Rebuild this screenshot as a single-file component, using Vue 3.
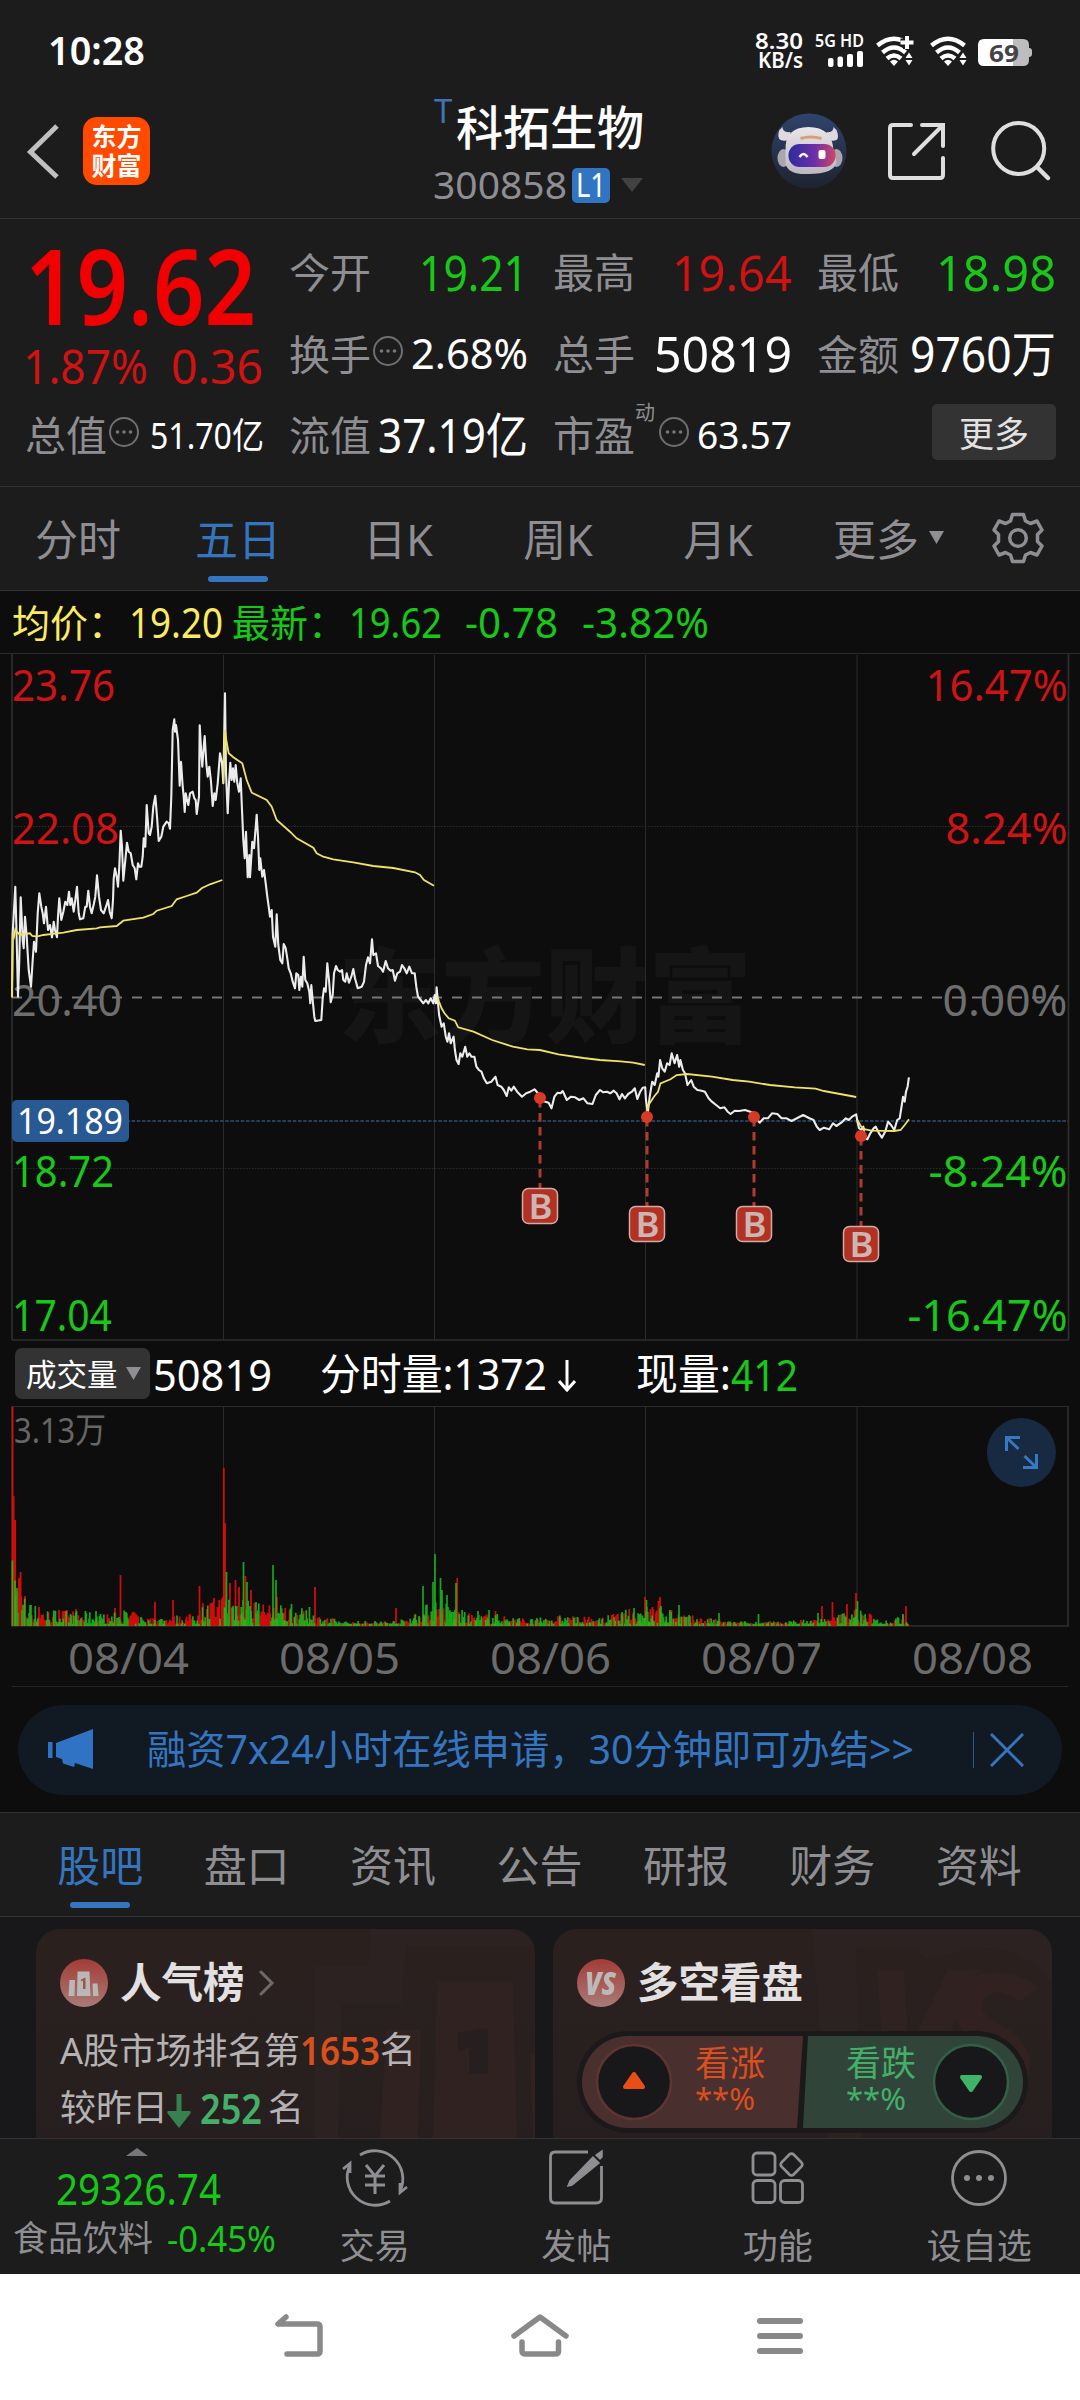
<script setup>
import { h } from 'vue'

// Single line of text fitted to a fixed width, vertically centred on its digits.
const Fit = (p) =>
  h('svg', { width: p.w, height: p.s, style: { overflow: 'visible', flex: 'none', display: 'block' } }, [
    h('text', { x: 0, y: p.s * 0.857, 'font-size': p.s, textLength: p.w, lengthAdjust: 'spacingAndGlyphs', fill: 'currentColor' }, p.t),
  ])
Fit.props = ['t', 'w', 's']

const quotes = [
  [
    { label: '今开', v: '19.21', w: 109, s: 50, c: 'green' },
    { label: '最高', v: '19.64', w: 120, s: 50, c: 'red' },
    { label: '最低', v: '18.98', w: 120, s: 50, c: 'green' },
  ],
  [
    { label: '换手', info: true, v: '2.68%', w: 117, s: 42 },
    { label: '总手', v: '50819', w: 138, s: 50 },
    { label: '金额', v: '9760万', w: 146, s: 49 },
  ],
]

const periods = ['分时', '五日', '日K', '周K', '月K']
const sections = ['股吧', '盘口', '资讯', '公告', '研报', '财务', '资料']
const dates = ['08/04', '08/05', '08/06', '08/07', '08/08']

// Compact point lists: early segment in thirds of a pixel, late segment in its own scale.
const early = (s) => s.trim().split(/\s+/).map((p) => { const [x, y] = p.split(',').map(Number); return (x / 3).toFixed(1) + ',' + (640 + y / 3).toFixed(1) }).join(' ')
const late = (s) => s.trim().split(/\s+/).map((p) => { const [x, y] = p.split(',').map(Number); return (430 + x / 2.412).toFixed(1) + ',' + (900 + y / 3).toFixed(1) }).join(' ')

const priceLine = early(`36,1072 38,880 46,740 50,900 54,1070 58,960 62,772 68,900 71,925 75,830 80,890 86,990 93,1040 98,960 102,905 108,935 113,820 118,760 124,800 128,820 132,850 138,800 144,870 150,855 156,892 161,845 165,870 171,892 174,830 178,775 184,840 190,815 196,785 202,795 207,755 211,795 215,775 221,815 226,780 231,740 236,820 240,838 250,835 256,800 260,800 265,752 270,800 275,820 282,790 286,770 291,706 297,770 303,810 311,820 318,800 324,780 329,815 335,835 339,780 341,716 345,685 350,710 354,740 358,680 362,572 366,620 370,722 375,670 381,608 386,635 392,640 398,675 404,685 409,718 414,670 418,680 424,680 428,650 431,595 436,620 440,495 446,580 450,585 455,560 460,500 466,467 471,530 476,603 484,590 490,560 500,545 506,550 510,566 514,470 518,270 523,238 525,275 528,255 534,300 539,437 543,365 548,440 551,470 554,516 557,460 560,475 565,495 570,460 578,455 583,475 587,480 590,522 597,470 599,256 604,340 607,380 611,320 614,288 619,370 623,410 628,380 633,425 638,498 643,460 647,480 653,430 660,340 666,370 670,430 675,160 678,400 683,520 687,430 691,368 695,420 699,385 703,425 707,375 712,430 717,455 722,415 726,510 730,600 734,655 738,575 743,712 748,645 750,712 757,605 762,625 770,524 774,590 778,690 781,655 787,710 792,690 797,730 802,770 806,800 810,830 815,810 819,890 826,920 830,823 835,915 841,960 847,970 851,912 857,925 862,955 866,985 872,1000 878,1025 885,1045 889,1000 895,1005 898,1050 903,1010 907,1040 911,950 916,1020 922,1030 928,1055 931,1090 934,1035 939,1090 943,1130 946,1143 964,1140 968,1075 972,1045 977,1055 982,970 987,1020 992,1087 998,1065 1002,1000 1008,978 1013,990 1020,995 1026,990 1030,1020 1036,1025 1040,1000 1047,1028 1054,1010 1060,987 1065,1015 1073,1045 1085,1040 1092,1025 1098,975 1104,952 1110,970 1116,898 1120,945 1128,940 1134,978 1143,985 1149,995 1157,963 1164,985 1172,992 1178,990 1185,1022 1192,1000 1200,995 1206,975 1213,985 1220,1000 1228,980 1236,1000 1244,1000 1249,1040 1254,1070 1262,1080 1270,1090 1278,1080 1285,1090 1292,1075 1300,1090 1304,1065 1308,1090`) + ' ' +
late(`16,262 22,345 28,380 33,370 38,410 42,425 46,400 50,430 57,410 60,450 64,480 69,492 73,460 78,470 85,440 90,470 95,460 100,470 107,470 112,500 118,510 124,515 130,535 137,550 148,545 158,530 163,555 172,560 178,570 185,588 190,562 196,572 202,560 210,575 222,590 232,580 242,575 252,568 262,582 268,600 278,605 286,608 293,625 300,590 308,578 315,580 320,573 330,600 340,590 350,592 360,600 370,595 380,610 392,612 400,585 410,570 418,577 427,575 435,580 443,572 450,580 457,598 463,582 470,595 478,582 487,575 494,565 500,597 507,575 513,563 519,562 521,600 525,640 530,590 536,545 542,555 548,520 551,530 555,480 560,505 566,515 572,490 578,495 583,460 590,490 596,465 601,500 604,480 610,510 615,520 621,555 630,540 636,560 645,570 655,572 663,575 672,595 680,605 690,615 700,625 710,622 718,635 725,642 735,632 745,633 760,630 772,635 783,640 790,660 795,668 805,655 815,655 825,640 838,642 848,655 860,655 872,663 885,655 900,645 915,655 925,660 933,680 940,690 950,683 963,688 972,670 980,678 992,668 1003,655 1010,660 1018,650 1028,643 1031,665 1035,685 1040,690 1045,680 1049,715 1055,718 1062,700 1070,685 1075,680 1083,700 1090,713 1098,695 1105,665 1112,675 1120,690 1127,660 1133,655 1138,615 1141,590 1145,605 1148,575 1152,560 1155,532`)

const averages = [
  early('36,1072 38,880 42,890 46,868 50,875 60,885 75,882 90,880 97,888 110,890 130,885 170,880 190,878 230,870 290,865 300,862 350,858 370,842 430,833 460,822 470,812 515,798 530,778 560,768 590,758 605,745 630,733 667,720'),
  early('670,430 675,270 679,300 686,340 700,352 727,370 740,420 755,458 800,480 815,500 830,540 870,575 890,595 940,623 950,640 970,650 1000,658 1060,667 1120,678 1180,684 1245,697 1260,705 1272,720 1302,737'),
  late('18,290 22,305 28,325 35,340 45,355 60,362 68,382 105,395 150,420 200,440 235,448 265,450 310,463 370,474 410,480 460,484 490,488 518,495'),
  late('523,640 527,615 540,590 550,575 556,550 580,538 595,525 620,522 680,530 730,540 770,545 820,555 880,562 930,566 950,573 1028,591'),
  late('1031,660 1040,680 1050,688 1065,692 1120,693 1135,690 1145,675 1155,658'),
]

const priceLabels = [
  { t: '23.76', w: 103, y: 685, c: '#cc1414' },
  { t: '22.08', w: 107, y: 828, c: '#cc1414' },
  { t: '20.40', w: 110, y: 1000, c: '#6e6e6e' },
  { t: '18.72', w: 102, y: 1171, c: '#1bc61b' },
  { t: '17.04', w: 100, y: 1315, c: '#1bc61b' },
]
const pctLabels = [
  { t: '16.47%', w: 142, y: 685, c: '#cc1414' },
  { t: '8.24%', w: 122, y: 828, c: '#cc1414' },
  { t: '0.00%', w: 125, y: 1000, c: '#6e6e6e' },
  { t: '-8.24%', w: 139, y: 1171, c: '#1bc61b' },
  { t: '-16.47%', w: 160, y: 1315, c: '#1bc61b' },
]
const buys = [
  { x: 540, y: 1098, b: 1206 },
  { x: 647, y: 1117, b: 1224 },
  { x: 754, y: 1117, b: 1224 },
  { x: 861, y: 1136, b: 1244 },
]

// Volume bars: envelope of typical heights, seeded jitter, plus individual spikes.
const envelope = [[12, 60], [18, 45], [22, 28], [30, 20], [45, 14], [60, 14], [90, 12], [110, 10], [125, 14], [150, 7], [190, 10], [225, 30], [245, 26], [262, 18], [290, 18], [320, 9], [345, 4], [400, 5], [420, 14], [436, 24], [450, 18], [470, 10], [500, 10], [530, 6], [560, 9], [600, 7], [640, 17], [665, 17], [690, 9], [730, 4], [780, 4], [830, 7], [857, 16], [875, 8], [890, 5], [909, 12]]
const spikes = [[12.6, 219, 1], [13.6, 130, 1], [15.2, 106, 1], [17, 38, 0], [19, 48, 1], [20.6, 54, 1], [25, 30, 1], [31, 21, 0], [39, 19, 1], [59, 16, 1], [76, 17, 1], [96, 15, 0], [115, 18, 1], [120.5, 51, 1], [155, 24, 1], [173, 26, 1], [199.5, 40, 1], [203, 23, 1], [223.8, 158, 1], [225, 103, 1], [226.5, 54, 0], [230, 43, 1], [235.5, 46, 1], [239, 39, 1], [243.5, 64, 0], [245.5, 50, 1], [247, 44, 0], [251, 36, 1], [256, 24, 0], [273, 61, 0], [276, 46, 0], [277, 29, 1], [291.5, 22, 0], [309.5, 19, 0], [315, 39, 1], [396, 18, 1], [423, 40, 0], [433, 44, 0], [435, 72, 0], [440.5, 48, 0], [442, 36, 0], [447, 31, 0], [456, 43, 0], [457.2, 48, 1], [478, 15, 0], [489, 16, 0], [495.5, 15, 1], [634, 18, 0], [645, 29, 1], [646.5, 26, 0], [652.5, 19, 1], [658.5, 25, 1], [660, 29, 1], [671, 14, 0], [679, 21, 0], [719, 13, 0], [758.5, 12, 0], [818, 13, 0], [822, 20, 1], [832.5, 24, 1], [847, 22, 1], [856, 33, 1], [857.5, 25, 0], [906, 20, 1], [903, 12, 0]]
let seed = 7
const rnd = () => ((seed = (seed * 16807) % 2147483647) / 2147483647)
const level = (x) => {
  for (let i = 1; i < envelope.length; i++) {
    const [a, ya] = envelope[i - 1]
    const [b, yb] = envelope[i]
    if (x <= b) return ya + ((yb - ya) * (x - a)) / (b - a)
  }
  return 8
}
const bars = []
let up = 1
for (let x = 12.4; x < 909; x += 0.88) {
  if (rnd() < 0.42) up = 1 - up
  bars.push({ x, v: Math.max(2.2, level(x) * (0.12 + Math.pow(rnd(), 1.4)) * 1.1), up })
}
for (const [x, v, u] of spikes) bars.push({ x, v, up: u })
const path = (u) => bars.filter((b) => b.up === u).map((b) => `M${b.x.toFixed(1)} 1626v-${b.v.toFixed(1)}`).join('')
const redBars = path(1)
const greenBars = path(0)
</script>

<template>
  <div class="screen">
    <div class="status">
      <Fit class="w6" t="10:28" :w="97" :s="39" />
      <svg class="sysicons" width="278" height="50" viewBox="755 27 278 50">
        <g fill="#fff" class="w6">
          <text x="755" y="49" font-size="22" textLength="48" lengthAdjust="spacingAndGlyphs">8.30</text>
          <text x="758" y="68" font-size="21" textLength="45" lengthAdjust="spacingAndGlyphs">KB/s</text>
          <text x="815" y="46.500" font-size="17.500" textLength="49" lengthAdjust="spacingAndGlyphs">5G HD</text>
          <rect x="828" y="58" width="5.500" height="9" rx="2" /><rect x="837.500" y="56.500" width="5.500" height="10.500" rx="2" />
          <rect x="847" y="54" width="6" height="13" rx="2" /><rect x="857" y="51" width="6" height="16" rx="2" />
        </g>
        <g v-for="x in [894, 948]" :key="x" :transform="`translate(${x} 0)`">
          <g fill="none" stroke="#fff" stroke-width="4.500">
            <path d="M-16.500 45.500Q0 32 16.500 45.500" /><path d="M-11.500 52.500Q0 42.500 11.500 52.500" /><path d="M-7 58.500Q0 52.500 7 58.500" />
          </g>
          <path d="M-4 61.500Q0 58 4 61.500L0 66ZM11.500 58L15 52.500L18.500 58ZM11.500 60L15 65.500L18.500 60Z" fill="#fff" />
        </g>
        <path d="M907 36V49M900.500 42.500H913.500" stroke="#1c1c1c" stroke-width="8" /><path d="M907 36V49M900.500 42.500H913.500" stroke="#fff" stroke-width="4" />
        <path d="M984 39H1013V66H984Q978 66 978 60V45Q978 39 984 39Z" fill="#fff" />
        <path d="M1013 39H1023Q1029 39 1029 45V48Q1032 48 1032 51V54Q1032 57 1029 57V60Q1029 66 1023 66H1013Z" fill="#bdbdbd" />
        <text class="w7" x="989" y="61.500" font-size="24" textLength="30" lengthAdjust="spacingAndGlyphs" fill="#444">69</text>
      </svg>
    </div>

    <header class="head">
      <div class="head-left">
        <svg width="34" height="58" viewBox="26 122 34 58"><path d="M57 126L30.500 152L57 177" fill="none" stroke="#c0c0c0" stroke-width="5" /></svg>
        <div class="logo"><span>东方</span><span>财富</span></div>
      </div>
      <div class="head-title">
        <div class="name"><span class="t">T</span>科拓生物</div>
        <div class="code">
          <Fit t="300858" :w="134" :s="38" />
          <span class="l1"><Fit t="L1" :w="30" :s="33" /></span>
          <svg width="22" height="14" viewBox="0 0 22 14"><path d="M0 0H22L11 14Z" fill="#424242" /></svg>
        </div>
      </div>
      <div class="head-right">
        <svg width="76" height="76" viewBox="770.500 113 76 76">
          <defs>
            <linearGradient id="sky" x1="0" y1="0" x2="0" y2="1"><stop offset="0" stop-color="#2f436b" /><stop offset="1" stop-color="#1e2330" /></linearGradient>
            <linearGradient id="visor"><stop offset="0" stop-color="#2f2c9c" /><stop offset=".55" stop-color="#6b2fa8" /><stop offset="1" stop-color="#cf4668" /></linearGradient>
            <linearGradient id="helm" x1="0" y1="0" x2="0" y2="1"><stop offset="0" stop-color="#e8e6ea" /><stop offset="1" stop-color="#bcb8bf" /></linearGradient>
          </defs>
          <circle cx="808.500" cy="151" r="37.500" fill="url(#sky)" />
          <path d="M789 140Q776 143 778 133Q779 129 782 127Q782 133 790 132ZM828 140Q840 143 837 133Q836 129 833 127Q833 133 826 132Z" fill="#ddd9df" />
          <ellipse cx="783" cy="158" rx="6" ry="9" fill="#a9a6b0" /><ellipse cx="836" cy="158" rx="6" ry="9" fill="#a9a6b0" />
          <path d="M785 151Q784 127 808 127Q832 127 833 151L836 162Q834 174 808 174Q788 175 785 164Z" fill="url(#helm)" />
          <rect x="788" y="144" width="47" height="23" rx="11" fill="url(#visor)" />
          <path d="M799 157Q803 151 807 157" fill="none" stroke="#fff" stroke-width="2.500" /><rect x="818" y="150" width="7" height="9" rx="2" fill="#fff" />
          <path d="M800 138.500Q810 135.500 821 138.500" fill="none" stroke="#d99f72" stroke-width="3" />
        </svg>
        <svg class="share" width="60" height="60" viewBox="887 121 60 60"><path d="M911 125H893Q890 125 890 128V175Q890 178 893 178H940Q943 178 943 175V158M922 125H943V146M942 126L914 154" fill="none" stroke="#dedede" stroke-width="4" stroke-linecap="round" /></svg>
        <svg width="62" height="62" viewBox="990 120 62 62"><circle cx="1018.700" cy="148.500" r="25.500" fill="none" stroke="#dedede" stroke-width="4" /><path d="M1037 167L1048 178" stroke="#dedede" stroke-width="4.500" stroke-linecap="round" /></svg>
      </div>
    </header>

    <section class="quote">
      <div class="main">
        <Fit class="w6 big" t="19.62" :w="231" :s="105" />
        <div class="chg red"><Fit t="1.87%" :w="125" :s="47" /><Fit t="0.36" :w="92" :s="47" /></div>
        <div class="cell"><span>总值</span><svg class="info" width="32" height="32" viewBox="0 0 32 32"><circle cx="16" cy="16" r="14" fill="none" stroke="#6f6f73" stroke-width="2" /><g fill="#77777b"><circle cx="9.500" cy="16" r="1.800" /><circle cx="16" cy="16" r="1.800" /><circle cx="22.500" cy="16" r="1.800" /></g></svg><Fit class="v" t="51.70亿" :w="114" :s="36" /></div>
      </div>
      <div class="grid">
        <div v-for="(row, i) in quotes" :key="i" class="row">
          <div v-for="q in row" :key="q.label" class="cell">
            <span>{{ q.label }}</span>
            <svg v-if="q.info" class="info" width="32" height="32" viewBox="0 0 32 32"><circle cx="16" cy="16" r="14" fill="none" stroke="#6f6f73" stroke-width="2" /><g fill="#77777b"><circle cx="9.500" cy="16" r="1.800" /><circle cx="16" cy="16" r="1.800" /><circle cx="22.500" cy="16" r="1.800" /></g></svg>
            <Fit class="v" :class="q.c" :t="q.v" :w="q.w" :s="q.s" />
          </div>
        </div>
        <div class="row">
          <div class="cell"><span>流值</span><Fit class="v" t="37.19亿" :w="150" :s="48" /></div>
          <div class="cell"><span>市盈</span><sup>动</sup><svg class="info" width="32" height="32" viewBox="0 0 32 32"><circle cx="16" cy="16" r="14" fill="none" stroke="#6f6f73" stroke-width="2" /><g fill="#77777b"><circle cx="9.500" cy="16" r="1.800" /><circle cx="16" cy="16" r="1.800" /><circle cx="22.500" cy="16" r="1.800" /></g></svg><Fit class="v" t="63.57" :w="95" :s="39" /></div>
          <div class="cell"><button>更多</button></div>
        </div>
      </div>
    </section>

    <nav class="periods">
      <div v-for="(p, i) in periods" :key="p" class="tab" :class="{ on: i === 1 }">{{ p }}</div>
      <div class="more">更多<svg width="15" height="13" viewBox="0 0 15 13"><path d="M0 0H15L7.500 13Z" fill="#8e8e93" /></svg></div>
      <svg class="gear" width="56" height="56" viewBox="-28 -28 56 56"><path d="M-5.500 -23.500H5.500L7.500 -17L12.500 -14.500L19 -17L24 -8L19.500 -3.500V3.500L24 8L19 17L12.500 14.500L7.500 17L5.500 23.500H-5.500L-7.500 17L-12.500 14.500L-19 17L-24 8L-19.500 3.500V-3.500L-24 -8L-19 -17L-12.500 -14.500L-7.500 -17Z" fill="none" stroke="#8e8e93" stroke-width="3.500" stroke-linejoin="round" /><circle r="8.300" fill="none" stroke="#8e8e93" stroke-width="3.500" /></svg>
    </nav>

    <div class="legend">
      <span class="yellow">均价：</span><Fit class="yellow" t="19.20" :w="94" :s="41" />
      <span class="green lg">最新：</span><Fit class="green" t="19.62" :w="93" :s="41" />
      <Fit class="green g2" t="-0.78" :w="93" :s="41" /><Fit class="green g3" t="-3.82%" :w="127" :s="41" />
    </div>

    <svg class="chart" width="1080" height="688" viewBox="0 653 1080 688">
      <text class="w9" x="338" y="1035" font-size="103" textLength="414" lengthAdjust="spacingAndGlyphs" fill="#151515">东方财富</text>
      <path d="M0 653.500H1080M223.500 655V1340M434.500 655V1340M645.500 655V1340M857 655V1340" stroke="#2b2b2b" stroke-width="1" />
      <path d="M12 654V1340M1068.500 654V1340M12 1340H1068.500" stroke="#2e2e2e" stroke-width="1.700" />
      <path d="M12 826.500H1068M12 1168.500H1068" stroke="#2c2c2c" stroke-dasharray="1.500 1.500" />
      <path d="M12 997.500H1068" stroke="#777" stroke-width="1.800" stroke-dasharray="10 10" />
      <path d="M12 1121H1068" stroke="#2d527c" stroke-width="1.700" stroke-dasharray="3.500 1.700" />
      <g v-for="l in priceLabels" :key="l.t"><text x="12" :y="l.y + 15.700" font-size="44" :textLength="l.w" lengthAdjust="spacingAndGlyphs" :fill="l.c">{{ l.t }}</text></g>
      <g v-for="l in pctLabels" :key="l.t"><text :x="1067.500 - l.w" :y="l.y + 15.700" font-size="44" :textLength="l.w" lengthAdjust="spacingAndGlyphs" :fill="l.c">{{ l.t }}</text></g>
      <polyline :points="priceLine" fill="none" stroke="#ececec" stroke-width="2.100" stroke-linejoin="round" />
      <polyline v-for="(a, i) in averages" :key="i" :points="a" fill="none" stroke="#eee268" stroke-width="1.800" />
      <rect x="12" y="1100" width="117" height="42" rx="5" fill="#285992" />
      <text x="17" y="1133.500" font-size="36" textLength="106" lengthAdjust="spacingAndGlyphs" fill="#fff">19.189</text>
      <g v-for="b in buys" :key="b.x">
        <path :d="`M${b.x} ${b.y}V${b.b - 18}`" stroke="#b03a2c" stroke-width="3" stroke-dasharray="8.500 5.500" stroke-dashoffset="-1" />
        <circle :cx="b.x" :cy="b.y" r="6" fill="#d83a28" />
        <rect :x="b.x - 17.500" :y="b.b - 17.500" width="35" height="35" rx="6" fill="#b13223" stroke="#d3aaa5" stroke-width="1.500" />
        <text class="w6" :x="b.x - 11.500" :y="b.b + 12.500" font-size="35" textLength="24" lengthAdjust="spacingAndGlyphs" fill="#ccb5b3">B</text>
      </g>
    </svg>

    <div class="volhead">
      <div class="pick">成交量<svg width="15" height="13" viewBox="0 0 15 13"><path d="M0 0H15L7.500 13Z" fill="#8e8e93" /></svg></div>
      <Fit t="50819" :w="119" :s="44" />
      <Fit class="v1" t="分时量:1372" :w="227" :s="43" />
      <svg class="down" width="18" height="32" viewBox="0 0 18 32"><path d="M9 0V29M1 21L9 30L17 21" fill="none" stroke="#fff" stroke-width="3" /></svg>
      <Fit class="v2" t="现量:" :w="95" :s="43" />
      <Fit class="green" t="412" :w="67" :s="44" />
    </div>

    <svg class="chart" width="1080" height="221" viewBox="0 1406 1080 221">
      <path d="M12 1406.500H1068M223.500 1406V1626M434.500 1406V1626M645.500 1406V1626M857 1406V1626" stroke="#2b2b2b" />
      <path d="M12 1406V1626H1068V1406" fill="none" stroke="#2e2e2e" stroke-width="1.700" />
      <path :d="redBars" stroke="#e40c0c" stroke-width="1.800" opacity=".9" />
      <path :d="greenBars" stroke="#1ec81e" stroke-width="1.700" opacity=".82" />
      <text x="14" y="1443" font-size="35" textLength="92" lengthAdjust="spacingAndGlyphs" fill="#666">3.13万</text>
      <circle cx="1021.400" cy="1452.500" r="34.500" fill="#182a41" />
      <path d="M1020 1437.500H1006.500V1451M1007 1438L1018.500 1449M1023 1467.500H1036.500V1454M1036 1467L1024.500 1456" fill="none" stroke="#3678c2" stroke-width="3" />
    </svg>

    <div class="dates"><div v-for="d in dates" :key="d"><Fit :t="d" :w="121" :s="44" /></div></div>

    <div class="promo-wrap">
      <div class="promo">
        <svg width="46" height="42" viewBox="47 1729 46 42"><path d="M48 1742H52.500V1758H48ZM56 1743L93 1729V1769L75 1763L74 1767L63 1763.500L62 1759L56 1757Z" fill="#3073c4" /></svg>
        <Fit class="txt" t="融资7x24小时在线申请，30分钟即可办结&gt;&gt;" :w="767" :s="40" />
        <i></i>
        <svg width="34" height="34" viewBox="0 0 34 34"><path d="M1 1L33 33M33 1L1 33" stroke="#3575c0" stroke-width="3" /></svg>
      </div>
    </div>

    <nav class="sections"><div v-for="(s, i) in sections" :key="s" class="tab" :class="{ on: i === 0 }">{{ s }}</div></nav>

    <section class="cards">
      <article class="card">
        <svg class="bg" width="499" height="209" viewBox="36 1929 499 209">
          <path d="M371 1929H515Q535 1929 535 1953V2032H549L542 1946H406L402 2004H342L338 2138H315V1966H368Z" fill="#2b2221" />
          <path d="M437 1982H513L517 2138H433ZM386 2030H421L418 2138H380ZM530 2054H535V2138H533Z" fill="#2f2221" />
          <path d="M458 2033L488 2028V2074H469V2047L458 2052Z" fill="#271f1f" />
        </svg>
        <div class="ttl">
          <svg width="48" height="48" viewBox="0 0 48 48"><defs><linearGradient id="rd" x1="0" y1="0" x2="0" y2="1"><stop offset="0" stop-color="#a33c37" /><stop offset="1" stop-color="#a97b76" /></linearGradient></defs><circle cx="24" cy="24" r="24" fill="url(#rd)" /><path d="M9.500 21H15L14.500 37H8.500ZM17.500 12.500H29.500L30.500 37H17ZM32.500 24.500H37.500L38.500 37H33Z" fill="#bab8b7" /><path d="M21 20.500L25.500 18.500V30H23V21.500L21 22.500Z" fill="#a05450" /></svg>
          <b>人气榜</b>
          <svg class="chev" width="16" height="26" viewBox="0 0 16 26"><path d="M2 2L13 13L2 24" fill="none" stroke="#6e6a6a" stroke-width="3" stroke-linecap="round" /></svg>
        </div>
        <div class="ln l2"><Fit t="A股市场排名第" :w="240" :s="36" /><Fit class="w6 orange" t="1653" :w="80" :s="40" /><span>名</span></div>
        <div class="ln l3"><span>较昨日</span><svg class="arr" width="24" height="34" viewBox="0 0 24 34"><path d="M9.500 0H14.500V17H22Q25 17 23 20L12 34L1 20Q-1 17 2 17H9.500Z" fill="#37814e" /></svg><Fit class="w6 gr2" t="252" :w="62" :s="41" /><span class="m">名</span></div>
      </article>
      <article class="card">
        <svg class="bg" width="499" height="209" viewBox="553 1929 499 209">
          <path d="M812 1929H1028Q1052 1929 1052 1953V1985Q1030 1945 970 1948L930 1960L910 1948H856L862 2138H828Z" fill="#2b2221" />
          <path d="M877 1970H904L908 2050L948 1970H978L920 2100H886Z" fill="#2f2221" />
          <path d="M1038 1988Q1020 1970 985 1973Q955 1980 955 2015Q960 2040 1000 2052Q1015 2070 990 2080L985 2120Q1030 2110 1030 2060Q1025 2035 995 2022Q975 2010 985 1998Q1000 1985 1018 2002Z" fill="#312221" />
        </svg>
        <div class="ttl">
          <svg width="48" height="48" viewBox="0 0 48 48"><circle cx="24" cy="24" r="24" fill="url(#rd)" /><text class="w9" x="8" y="36" font-size="32" textLength="31" lengthAdjust="spacingAndGlyphs" font-style="italic" fill="#bdb9b8">VS</text></svg>
          <b>多空看盘</b>
        </div>
        <svg class="vote" width="452" height="102" viewBox="577 2031 452 102">
          <rect x="577" y="2031" width="451" height="102" rx="51" fill="#1b191a" />
          <path d="M628 2036H803L797 2128H628A46 46 0 0 1 628 2036Z" fill="#49302e" />
          <path d="M808 2036H977A46 46 0 0 1 977 2128H803Z" fill="#30443a" />
          <circle cx="634" cy="2082" r="37" fill="#18181a" stroke="#5e3531" stroke-width="2.500" /><circle cx="971" cy="2082" r="37" fill="#18181a" stroke="#345f46" stroke-width="2.500" />
          <path d="M634 2074L643 2087H625Z" fill="#e94e17" stroke="#e94e17" stroke-width="4" stroke-linejoin="round" />
          <path d="M971 2090L980 2077H962Z" fill="#3fb367" stroke="#3fb367" stroke-width="4" stroke-linejoin="round" />
          <g fill="#d94f20"><text x="695" y="2076" font-size="35">看涨</text><text x="695" y="2110" font-size="31" textLength="60" lengthAdjust="spacingAndGlyphs">**%</text></g>
          <g fill="#45ae68"><text x="846" y="2076" font-size="35">看跌</text><text x="846" y="2110" font-size="31" textLength="60" lengthAdjust="spacingAndGlyphs">**%</text></g>
        </svg>
      </article>
    </section>

    <footer class="bar">
      <div class="index">
        <svg width="22" height="8" viewBox="0 0 22 8"><path d="M0 8L11 0L22 8Z" fill="#77777b" /></svg>
        <Fit class="green n1" t="29326.74" :w="165" :s="43" />
        <div class="sub"><span>食品饮料</span><Fit class="green" t="-0.45%" :w="109" :s="36" /></div>
      </div>
      <div class="act">
        <svg width="66" height="60" viewBox="-33 -30 66 60" fill="none" stroke="#8e8e93" stroke-width="2.800"><path d="M-15 -23A28 28 0 0 1 25 13M15 23A28 28 0 0 1 -25 -13M-32 -9L-25 -14.500V-5M32 9L25 14.500V5" /><path d="M-9 -13L0 -2L9 -13M0 -2V16M-10 -2H10M-10 7H10" stroke-width="3" /></svg>
        <span>交易</span>
      </div>
      <div class="act">
        <svg width="60" height="60" viewBox="-30 -30 60 60" fill="none" stroke="#8e8e93" stroke-width="2.800"><path d="M12 -26H-21Q-25.500 -26 -25.500 -21V20Q-25.500 25 -21 25H20Q25.500 25 25.500 20V-12" /><path d="M20 -18L23 -15L-4 7L-8 8L-6 3L17 -21ZM20 -23L26 -27V-21L24 -19Z" fill="#8e8e93" stroke-width="1.500" /></svg>
        <span>发帖</span>
      </div>
      <div class="act">
        <svg width="60" height="60" viewBox="-30 -30 60 60" fill="none" stroke="#8e8e93" stroke-width="2.800"><rect x="-25" y="-25" width="22" height="22" rx="4" /><rect x="-25" y="2.500" width="22" height="22" rx="4" /><rect x="2.500" y="2.500" width="22" height="22" rx="4" /><rect x="5" y="-22" width="17" height="17" rx="3" transform="rotate(45 13.500 -13.500)" /></svg>
        <span>功能</span>
      </div>
      <div class="act">
        <svg width="60" height="60" viewBox="-30 -30 60 60"><circle r="26.500" fill="none" stroke="#8e8e93" stroke-width="2.800" /><g fill="#8e8e93"><circle cx="-12" r="3" /><circle r="3" /><circle cx="12" r="3" /></g></svg>
        <span>设自选</span>
      </div>
    </footer>

    <div class="sysnav">
      <svg width="50" height="44" viewBox="275 2312 50 44"><path d="M287 2315L279 2322H318Q321 2322 321 2325V2349Q321 2352 318 2352H288" fill="none" stroke="#898989" stroke-width="5.500" stroke-linecap="round" stroke-linejoin="round" /></svg>
      <svg width="60" height="46" viewBox="510 2311 60 46"><path d="M514 2334L540 2315L566 2334M522 2340V2349Q522 2352 526 2352H555Q558.500 2352 558.500 2349V2340" fill="none" stroke="#898989" stroke-width="5.500" stroke-linecap="round" stroke-linejoin="round" /></svg>
      <svg width="48" height="44" viewBox="756 2315 48 44"><path d="M760 2322H800M760 2337H800M760 2352H800" stroke="#898989" stroke-width="6" stroke-linecap="round" /></svg>
    </div>
  </div>
</template>

<style>
body { margin: 0; background: #1c1c1c; }
</style>

<style scoped>
.screen { width: 1080px; height: 2400px; overflow: hidden; background: #1c1c1c; color: #fff; font-family: "Noto Sans", "Noto Sans CJK SC", sans-serif; box-sizing: border-box; }
.screen * { box-sizing: border-box; }
svg { display: block; flex: none; }
.sysicons { overflow: visible; }
.w6 { font-weight: 600; }
.w7 { font-weight: 700; }
.w9 { font-weight: 900; }
.red { color: #cf1212; }
.green { color: #18c818; }
.yellow { color: #fbea63; }
.orange { color: #d9501f; }

.status { height: 100px; padding: 0 47px 0 48px; display: flex; justify-content: space-between; align-items: flex-start; }
.status > :first-child { margin-top: 32px; }
.sysicons { margin-top: 27px; }

.head { height: 119px; border-bottom: 1px solid #333; display: grid; grid-template-columns: 400px 280px 400px; }
.head-left { display: flex; align-items: flex-start; padding: 17px 0 0 26px; gap: 23px; }
.head-left > svg { margin-top: 5px; }
.logo { width: 67px; height: 68px; border-radius: 14px; background: #ff4a00; display: flex; flex-direction: column; align-items: center; justify-content: center; padding-bottom: 3px; font: 700 25px/29px "Noto Sans CJK SC", sans-serif; }
.head-title { display: flex; flex-direction: column; align-items: center; }
.name { height: 60px; margin: -3px 0 0 -2px; display: flex; font-size: 47px; line-height: 60px; font-weight: 500; }
.t { font-size: 33px; line-height: 24px; width: 21px; color: #3e74b4; font-weight: 400; margin: 2px 1px 0 0; }
.code { display: flex; align-items: center; height: 36px; margin-top: 10px; color: #8e8e93; margin-left: -5px; }
.l1 { width: 38px; height: 35px; background: #3175c2; border-radius: 5px; margin: 0 11px 0 5px; display: flex; align-items: center; justify-content: center; color: #fff; }
.head-right { display: flex; align-items: flex-start; padding: 13px 0 0 91px; }
.share { margin: 8px 43px 0 40px; }
.head-right > :last-child { margin-top: 7px; }

.quote { height: 268px; border-bottom: 1px solid #333; display: flex; }
.main { width: 289px; padding-left: 25px; }
.big { color: #f00000; margin-top: 16px; }
.chg { display: flex; justify-content: space-between; width: 240px; height: 47px; margin-top: 4px; margin-left: -2px; }
.main .cell { margin-top: 4px; }
.grid { width: 767px; display: flex; flex-direction: column; padding-top: 13px; }
.row { display: flex; justify-content: space-between; height: 81.500px; }
.cell { width: 239px; height: 81.500px; display: flex; align-items: center; font-size: 41px; line-height: 60px; color: #8e8e93; }
.cell span { margin-top: -1px; }
.cell .v { margin-left: auto; }
.cell .v:not(.red):not(.green) { color: #fff; }
.info { margin: -7px 0 0 1px; }
.cell sup { font-size: 20px; line-height: 24px; width: 22px; margin-top: -46px; vertical-align: top; }
.cell button { margin: -7px 0 0 auto; width: 124px; height: 56px; border: 0; border-radius: 5px; background: #333; color: #e2e2e2; font: 35px/50px "Noto Sans CJK SC", sans-serif; padding: 0; }

.periods { height: 104px; border-bottom: 1px solid #333; display: flex; color: #8e8e93; font-size: 43px; line-height: 105px; }
.periods .tab { width: 160px; text-align: center; position: relative; left: -2px; }
.tab.on { color: #3575bf; }
.tab.on::after { content: ""; position: absolute; left: calc(50% - 30px); bottom: 8px; width: 60px; height: 6px; border-radius: 3px; background: #3575bf; }
.more { display: flex; align-items: center; padding-left: 33px; width: 190px; height: 105px; gap: 10px; }
.more svg { margin-top: -5px; }
.gear { margin-top: 23px; }

.legend { height: 62px; background: #0d0d0d; display: flex; align-items: center; padding-left: 12px; font-size: 38px; line-height: 50px; padding-top: 2px; }
.legend span { width: 117px; white-space: nowrap; margin-top: -3px; }
.legend .lg { margin-left: 9px; }
.g2 { margin-left: 23px; }
.g3 { margin-left: 24px; }
.chart { background: #0d0d0d; }

.volhead { height: 65px; background: #0d0d0d; display: flex; align-items: center; padding: 2px 0 0 15px; }
.pick { width: 135px; height: 51px; border-radius: 7px; background: #333; font-size: 30.500px; line-height: 48px; display: flex; align-items: center; justify-content: space-between; padding: 0 9px 0 11px; margin-right: 3px; margin-top: -2px; }
.v1 { margin-left: 48px; }
.down { margin: 3px 60px 0 11px; }

.dates { height: 60px; background: #0d0d0d; display: flex; padding-left: 12px; position: relative; color: #6b6b6b; }
.dates > div { width: 211px; padding: 9px 0 0 56px; }
.dates::after { content: ""; position: absolute; left: 12px; right: 12px; bottom: 0; height: 1.500px; background: #242424; }
.promo-wrap { height: 125px; background: #0d0d0d; padding: 18px; }
.promo { height: 90px; border-radius: 45px; background: #111922; display: flex; align-items: center; color: #3575c0; padding: 0 38px 0 29px; }
.promo .txt { margin-left: 54px; }
.promo i { width: 1.500px; height: 36px; background: #2c588a; margin: 0 16px 0 auto; }

.sections { height: 105px; border-top: 1px solid #333; border-bottom: 1px solid #333; display: flex; padding: 0 28px 0 27px; color: #8e8e93; font-size: 43px; line-height: 106px; }
.sections .tab { flex: 1; text-align: center; position: relative; }

.cards { height: 221px; background: #18181a; display: flex; gap: 18px; padding: 12px 28px 0 36px; }
.card { width: 499px; height: 209px; border-radius: 24px 24px 0 0; background: linear-gradient(#2a211f, #271f1f); position: relative; overflow: hidden; padding: 30px 0 0 24px; }
.bg { position: absolute; left: 0; top: 0; }
.ttl { position: relative; display: flex; align-items: center; height: 48px; font-size: 41.500px; line-height: 48px; color: #e2e0e0; }
.ttl b { margin: -3px 0 0 12px; font-weight: 700; }
.chev { margin-left: 14px; }
.ln { position: relative; display: flex; align-items: center; color: #b4b2b2; font-size: 36px; line-height: 50px; height: 50px; }
.ln span { margin-top: -3px; }
.l2 { margin-top: 19px; }
.l2 span { margin-left: 0; }
.l3 { margin-top: 8px; }
.arr { margin: 4px 9px 0 -1px; }
.gr2 { color: #45ae68; }
.ln .m { margin-left: 6px; }
.vote { position: relative; margin-top: 24px; }

.bar { height: 136px; border-top: 1px solid #333; display: flex; color: #8e8e93; font-size: 35px; }
.index { width: 274px; position: relative; display: flex; flex-direction: column; align-items: center; padding-top: 9px; }
.n1 { margin: 12px 0 0 2px; }
.sub { display: flex; align-items: center; align-self: flex-start; white-space: nowrap; padding-left: 13px; margin-top: 3px; line-height: 50px; gap: 13px; }
.sub span { width: 141px; margin-top: -1px; }
.act { width: 201.500px; display: flex; flex-direction: column; align-items: center; padding-top: 9px; line-height: 50px; }
.act span { margin-top: 13px; }

.sysnav { height: 126px; background: #fff; display: flex; align-items: center; justify-content: center; gap: 186px; padding: 0 2px 2px 0; }
</style>
